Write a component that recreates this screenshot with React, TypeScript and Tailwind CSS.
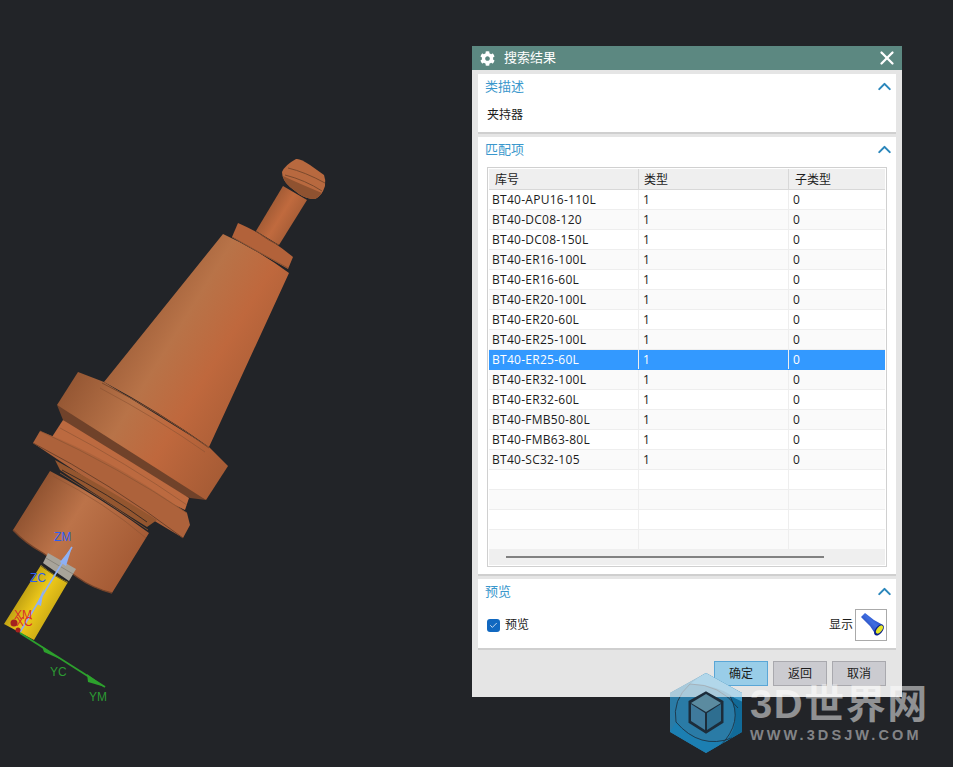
import { X, ChevronUp, Check } from "lucide-react";
import { FaCog } from "react-icons/fa";

const rows = [
  "BT40-APU16-110L",
  "BT40-DC08-120",
  "BT40-DC08-150L",
  "BT40-ER16-100L",
  "BT40-ER16-60L",
  "BT40-ER20-100L",
  "BT40-ER20-60L",
  "BT40-ER25-100L",
  "BT40-ER25-60L",
  "BT40-ER32-100L",
  "BT40-ER32-60L",
  "BT40-FMB50-80L",
  "BT40-FMB63-80L",
  "BT40-SC32-105",
  "",
  "",
  "",
  "",
];

const SectionHeader = ({ title }: { title: string }) => (
  <div className="flex h-[26px] items-center justify-between pl-[7px] pr-px">
    <span className="text-[13px] text-[#3a97cc]">{title}</span>
    <ChevronUp size={21} strokeWidth={2.4} className="mb-[2px] text-[#2a86bb]" />
  </div>
);

const ToolModel = () => (
  <svg className="absolute left-0 top-0" width="340" height="720" viewBox="0 0 340 720">
    <defs>
      <linearGradient id="body" gradientUnits="userSpaceOnUse" x1="95" y1="320" x2="265" y2="425">
        <stop offset="0" stopColor="#8f5230" />
        <stop offset="0.38" stopColor="#b87348" />
        <stop offset="0.62" stopColor="#bf683d" />
        <stop offset="1" stopColor="#a35a34" />
      </linearGradient>
      <linearGradient id="lower" gradientUnits="userSpaceOnUse" x1="28" y1="500" x2="130" y2="565">
        <stop offset="0" stopColor="#8f5230" />
        <stop offset="0.4" stopColor="#bc7349" />
        <stop offset="1" stopColor="#a55b35" />
      </linearGradient>
      <linearGradient id="stem" gradientUnits="userSpaceOnUse" x1="268" y1="208" x2="294" y2="224">
        <stop offset="0" stopColor="#a25b35" />
        <stop offset="0.5" stopColor="#c06a3e" />
        <stop offset="1" stopColor="#a85e37" />
      </linearGradient>
      <linearGradient id="yellow" gradientUnits="userSpaceOnUse" x1="20" y1="590" x2="56" y2="612">
        <stop offset="0" stopColor="#b89a12" />
        <stop offset="0.5" stopColor="#eec91a" />
        <stop offset="1" stopColor="#c9a814" />
      </linearGradient>
    </defs>

    {/* pull stud */}
    <path d="M283 186 L307 200 L279 245 L256 231 Z" fill="url(#stem)" />
    <path d="M282 172 Q285 165 296 159 Q300 158 310 165 L324 175 Q326 180 325 186 Q322 196 315 199 Q306 199 299 194 L290 187 Q282 180 282 172 Z" fill="#b8693f" />
    <path d="M283 176 Q298 183 322 193 Q318 198 315 199 Q306 199 299 194 L290 187 Q284 182 283 176 Z" fill="#8f5230" />
    <path d="M288 168 Q305 172 325 183 M285 175 Q305 180 322 191" stroke="#7c4a2d" strokeWidth="1" fill="none" />

    {/* collar + big flange + cone */}
    <path d="M238 223 Q268 236 293 257 L288 269 L232 237 Z" fill="#b2623a" />
    <path d="M256 231 Q270 242 279 245" stroke="#7c4a2d" fill="none" />
    <path d="M78 372 L104 382 L209 447 L228 466 L206 500 Q125 465 57 405 Z" fill="url(#body)" />
    <path d="M223 234 Q258 250 289 273 L209 447 Q160 412 104 382 Z" fill="url(#body)" />
    <path d="M232 237 Q262 254 288 268" stroke="#8a5232" fill="none" />
    <path d="M102 383 Q160 412 209 448" stroke="#7c4a2d" fill="none" />
    <path d="M100 388 Q160 420 205 452" stroke="#8a5232" fill="none" opacity="0.6" />
    <path d="M57 405 Q120 445 206 500 L190 498 Q120 470 63 420 Z" fill="#70422a" />

    {/* neck */}
    <path d="M63 420 Q125 458 189 498 L185 510 Q110 475 50 440 Z" fill="#bc6a40" />
    <path d="M60 428 Q125 462 187 505" stroke="#8a5232" fill="none" opacity="0.6" />

    {/* second flange */}
    <path d="M40 431 Q110 458 187 513 L190 525 L183 538 Q110 495 33 443 Z" fill="#ad623b" />
    <path d="M40 431 Q120 468 187 513" stroke="#8a5232" fill="none" opacity="0.7" />
    <path d="M33 443 Q110 483 183 538" stroke="#70422a" fill="none" />

    {/* thread */}
    <path d="M55 460 Q110 490 157 520 L147 527 Q100 498 60 470 Z" fill="#94562f" />
    <path d="M62 470 Q110 495 147 522" stroke="#3d2b22" strokeWidth="1" fill="none" />
    <path d="M60 473 Q105 500 148 530" stroke="#7c4a2d" fill="none" />

    {/* lower body */}
    <path d="M50 471 Q100 497 149 533 L112 593 Q92 588 77 577 L43 553 Q25 543 13 530 Z" fill="url(#lower)" />
    <path d="M53 476 Q105 503 146 538" stroke="#8a5232" fill="none" opacity="0.6" />
    <path d="M13 530 Q25 543 43 553 L77 577 Q92 588 112 593" stroke="#74432a" strokeWidth="1.4" fill="none" />

    {/* yellow holder and grey band */}
    <path d="M48 553 L76 569 L69 581 L43 563 Z" fill="#a8a49a" />
    <path d="M46 558 L73 574" stroke="#8a867c" fill="none" />
    <path d="M41 565 Q54 576 68 582 L34 640 L4 624 Z" fill="url(#yellow)" />
    <path d="M41 566 Q54 576 68 583" stroke="#6b5d22" fill="none" />

    {/* wcs axes */}
    <path d="M20 632 L72 547" stroke="#8eb0f4" strokeWidth="1.6" />
    <path d="M72 547 L60 562 L66 566 Z" fill="#8eb0f4" />
    <path d="M44 588 L37 604 L41 606 Z" fill="#8eb0f4" />
    <path d="M20 633 L105 687" stroke="#2da12d" strokeWidth="1.8" />
    <path d="M105 687 L87 674 L88 682 Z" fill="#2da12d" />
    <path d="M60 659 L42 646 L44 652 Z" fill="#2da12d" />
    <circle cx="14" cy="623" r="3.5" fill="#a5221f" />
    <circle cx="18" cy="630" r="2.5" fill="#a5221f" />

    <g fontFamily="'Liberation Sans', sans-serif" fontSize="12">
      <text x="54" y="541" fill="#2c5ff0">ZM</text>
      <text x="30" y="582" fill="#2c5ff0">ZC</text>
      <text x="14" y="619" fill="#d8302c">XM</text>
      <text x="16" y="626" fill="#d8302c">XC</text>
      <text x="50" y="676" fill="#2c9a33">YC</text>
      <text x="89" y="701" fill="#2c9a33">YM</text>
    </g>
  </svg>
);

const Watermark = () => (
  <div className="pointer-events-none absolute left-[670px] top-[672px] flex gap-[7px]">
    <svg width="73" height="82" viewBox="0 0 73 82">
      <defs>
        <clipPath id="hex">
          <path d="M36 1 L72 21 L72 60 L36 81 L0 60 L0 21 Z" />
        </clipPath>
      </defs>
      <g clipPath="url(#hex)">
        <rect width="73" height="82" fill="#2a7ba6" />
        <path d="M36 0 L73 21 L73 36 Q60 14 20 12 Z" fill="#3f9ccb" />
        <path d="M73 30 L73 60 L50 74 Q74 56 60 24 Z" fill="#116a98" />
        <path d="M6 50 Q30 78 62 66 L36 82 L0 60 Z" fill="#1c7fb2" />
        <path d="M20 12 Q2 28 6 50 M60 24 Q74 50 50 74 M6 50 Q30 78 62 66 M20 12 Q50 12 68 36" stroke="#1c2c3a" strokeWidth="0.8" fill="none" />
        <rect width="73" height="25" fill="#ffffff" opacity="0.6" />
      </g>
      <path d="M36 21 L52 30 L52 50 L36 60 L20 50 L20 30 Z" fill="#1c2c3a" stroke="#1c2c3a" strokeWidth="3" />
      <path d="M36 22 L51 31 L36 40 L21 31 Z" fill="#5b8ba0" />
      <path d="M21 32 L35 41 L35 58 L21 49 Z" fill="#3f7a9c" />
      <path d="M37 41 L51 32 L51 49 L37 58 Z" fill="#2e6e90" />
    </svg>
    <div className="flex flex-col pt-[10px] text-white/50">
      <span className="text-[40px] font-bold leading-[44px] tracking-[1.5px] [font-family:'Liberation_Sans','Noto_Sans_CJK_SC',sans-serif]">
        3D世界网
      </span>
      <span className="text-[14.5px] font-bold leading-[18px] tracking-[3.1px] text-white/45 [font-family:'Liberation_Sans',sans-serif]">
        WWW.3DSJW.COM
      </span>
    </div>
  </div>
);

const App = () => {
  return (
    <div className="relative h-[767px] w-[953px] overflow-hidden bg-[#222428] text-[12px] text-[#1c1c1c] [font-family:'Open_Sans','Noto_Sans_CJK_SC',sans-serif]">
      <ToolModel />

      <div className="absolute left-[472px] top-[46px] flex h-[651px] w-[430px] flex-col bg-[#e5e5e5]">
        <div className="flex h-[24px] shrink-0 items-center justify-between bg-[#5c8881] pl-[8px] pr-[4px] text-white">
          <div className="flex items-center gap-[9px]">
            <FaCog size={15} />
            <span className="text-[13px]">搜索结果</span>
          </div>
          <X size={22} strokeWidth={2.5} />
        </div>

        <div className="flex flex-1 flex-col gap-[3px] px-[6px] pt-1">
          <div className="h-[60px] border-b-2 border-[#cfcfcf] bg-white">
            <SectionHeader title="类描述" />
            <div className="pl-[9px] pt-[6px] leading-[18px]">夹持器</div>
          </div>

          <div className="h-[439px] border-b-2 border-[#cfcfcf] bg-white">
            <SectionHeader title="匹配项" />
            <div className="ml-[9px] mt-[4px] h-[400px] w-[400px] border border-[#d0d0d0] p-px">
              <div className="flex h-[21px] border-b border-[#d8d8d8] bg-[#efefef] leading-[21px]">
                <div className="w-[150px] border-r border-[#d8d8d8] pl-[6px]">库号</div>
                <div className="w-[150px] border-r border-[#d8d8d8] pl-[5px]">类型</div>
                <div className="flex-1 pl-[6px]">子类型</div>
              </div>
              <div className="h-[359px] overflow-hidden">
                {rows.map((name, i) => (
                  <div
                    key={i}
                    className={`flex h-[20px] border-b leading-[19px] ${
                      i === 8
                        ? "border-[#3399ff] bg-[#3399ff] text-white"
                        : `border-[#eeeeee] ${i % 2 === 1 ? "bg-[#fafafa]" : "bg-white"}`
                    }`}
                  >
                    <div className="w-[150px] border-r border-[#eeeeee] pl-[3px] tracking-[0.27px]">{name}</div>
                    <div className="w-[150px] border-r border-[#eeeeee] pl-[4px]">{name ? "1" : ""}</div>
                    <div className="flex-1 pl-[4px]">{name ? "0" : ""}</div>
                  </div>
                ))}
              </div>
              <div className="flex h-[16px] items-center bg-[#efefef] pl-[17px]">
                <div className="h-[2px] w-[318px] bg-[#808080]" />
              </div>
            </div>
          </div>

          <div className="h-[71px] border-b-2 border-[#cfcfcf] bg-white">
            <SectionHeader title="预览" />
            <div className="flex items-center justify-between pl-[9px] pr-[9px] pt-[4px]">
              <label className="flex items-center gap-[5px]">
                <span className="flex h-[13px] w-[13px] items-center justify-center rounded-[3px] bg-[#1168c0]">
                  <Check size={9} strokeWidth={2} className="text-white" />
                </span>
                预览
              </label>
              <div className="flex items-center gap-[2px]">
                <span>显示</span>
                <div className="h-[32px] w-[32px] border border-[#aaaaaa]">
                  <svg width="30" height="30" viewBox="0 0 30 30">
                    <defs>
                      <linearGradient id="torch" x1="0" y1="1" x2="1" y2="0">
                        <stop offset="0" stopColor="#0a1f8c" />
                        <stop offset="0.55" stopColor="#3f6de0" />
                        <stop offset="1" stopColor="#0d2aa0" />
                      </linearGradient>
                    </defs>
                    <path d="M5 7 L9 3 L18 10 L27 15 L20 25 L14 16 Z" fill="url(#torch)" />
                    <ellipse cx="23" cy="20" rx="6.5" ry="3.6" transform="rotate(-52 23 20)" fill="#0a1f8c" />
                    <ellipse cx="23.5" cy="19.5" rx="4.8" ry="2.4" transform="rotate(-52 23.5 19.5)" fill="#e6e628" />
                  </svg>
                </div>
              </div>
            </div>
          </div>

          <div className="flex justify-end gap-[5px] pr-[10px] pt-2">
            <button className="h-[25px] w-[54px] border border-[#5aa6d6] bg-[#99cde8]">确定</button>
            <button className="h-[25px] w-[54px] border border-[#a9a9ae] bg-[#cbcbd0]">返回</button>
            <button className="h-[25px] w-[54px] border border-[#a9a9ae] bg-[#cbcbd0]">取消</button>
          </div>
        </div>
      </div>

      <Watermark />
    </div>
  );
};

export default App;
